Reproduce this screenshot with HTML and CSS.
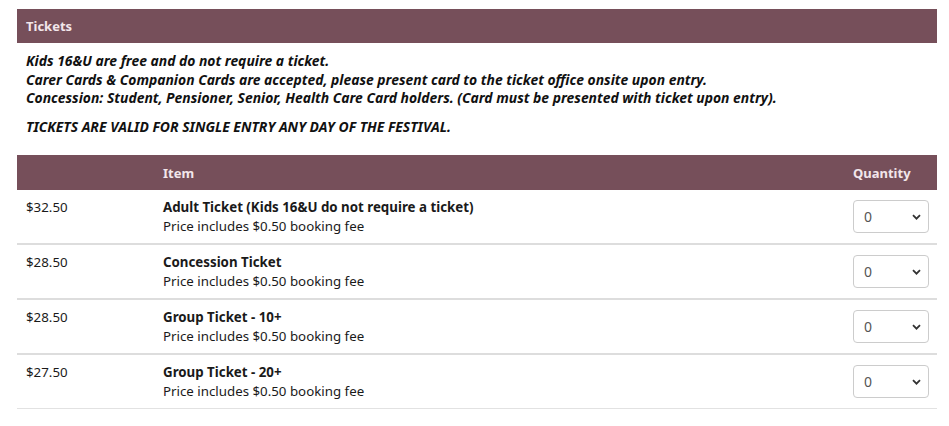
FILE: index.html
```html
<!DOCTYPE html>
<html lang="en">
<head>
    <meta charset="UTF-8">
    <meta name="viewport" content="width=device-width, initial-scale=1.0">
    <title>Tickets</title>
    <link rel="stylesheet" href="styles.css">
</head>
<body>
    <div class="tickets">
        <div class="panel-head">Tickets</div>

        <div class="notes">
            <p>Kids 16&amp;U are free and do not require a ticket.<br>
            Carer Cards &amp; Companion Cards are accepted, please present card to the ticket office onsite upon entry.<br>
            Concession: Student, Pensioner, Senior, Health Care Card holders. (Card must be presented with ticket upon entry).</p>
            <p>TICKETS ARE VALID FOR SINGLE ENTRY ANY DAY OF THE FESTIVAL.</p>
        </div>

        <table class="ticket-table">
            <thead>
                <tr>
                    <th class="col-price"></th>
                    <th>Item</th>
                    <th class="col-qty">Quantity</th>
                </tr>
            </thead>
            <tbody>
                <tr>
                    <td>$32.50</td>
                    <td><b>Adult Ticket (Kids 16&amp;U do not require a ticket)</b><br>Price includes $0.50 booking fee</td>
                    <td class="qty-cell"><select class="qty"><option>0</option><option>1</option><option>2</option></select></td>
                </tr>
                <tr>
                    <td>$28.50</td>
                    <td><b>Concession Ticket</b><br>Price includes $0.50 booking fee</td>
                    <td class="qty-cell"><select class="qty"><option>0</option><option>1</option><option>2</option></select></td>
                </tr>
                <tr>
                    <td>$28.50</td>
                    <td><b>Group Ticket - 10+</b><br>Price includes $0.50 booking fee</td>
                    <td class="qty-cell"><select class="qty"><option>0</option><option>10</option><option>11</option></select></td>
                </tr>
                <tr class="last">
                    <td>$27.50</td>
                    <td><b>Group Ticket - 20+</b><br>Price includes $0.50 booking fee</td>
                    <td class="qty-cell"><select class="qty"><option>0</option><option>20</option><option>21</option></select></td>
                </tr>
            </tbody>
        </table>
    </div>
</body>
</html>
```

FILE: styles.css
```css
body {
    margin: 0;
    background: #ffffff;
    color: #111111;
    font-family: "Noto Sans", "Open Sans", sans-serif;
    font-size: 13px;
}

.tickets {
    width: 920px;
    margin-left: 17px;
    padding-top: 9px;
}

/* maroon title bar */
.panel-head {
    height: 34px;
    line-height: 34px;
    padding-left: 9px;
    background-color: #764f5a;
    color: #f2e6ea;
    font-weight: bold;
}

.notes {
    padding: 9px 9px 0 9px;
    font-size: 13.9px;
    font-style: italic;
    font-weight: bold;
    line-height: 18.5px;
}

.notes p {
    margin: 0 0 10px 0;
}

.ticket-table {
    width: 100%;
    margin-top: 19px;
    border-collapse: collapse;
    table-layout: fixed;
}

.ticket-table th {
    height: 35px;
    padding: 0 9px;
    background-color: #764f5a;
    color: #f2e6ea;
    text-align: left;
    font-weight: bold;
}

.ticket-table th.col-price {
    width: 119px;
}

.ticket-table th.col-qty {
    width: 75px;
}

.ticket-table td {
    padding: 8px 9px 7px 9px;
    vertical-align: top;
    font-size: 13.3px;
    line-height: 19px;
    color: #1a1a1a;
    border-bottom: 2px solid #dddddd;
}

.ticket-table tr.last td {
    border-bottom: 1px solid #e2e2e2;
}

.ticket-table td.qty-cell {
    padding-top: 10px;
    padding-bottom: 10px;
}

.qty {
    display: block;
    width: 76px;
    height: 33px;
    padding: 0 10px;
    border: 1px solid #cccccc;
    border-radius: 4px;
    background: #ffffff url("data:image/svg+xml;utf8,<svg xmlns='http://www.w3.org/2000/svg' width='9' height='6' viewBox='0 0 9 6'><path d='M1 1.2l3.5 3.5 3.5-3.5' fill='none' stroke='%23333' stroke-width='1.8'/></svg>") no-repeat right 7px center;
    color: #555555;
    font-family: "Noto Sans", "Open Sans", sans-serif;
    font-size: 14px;
    -webkit-appearance: none;
    appearance: none;
}
```
